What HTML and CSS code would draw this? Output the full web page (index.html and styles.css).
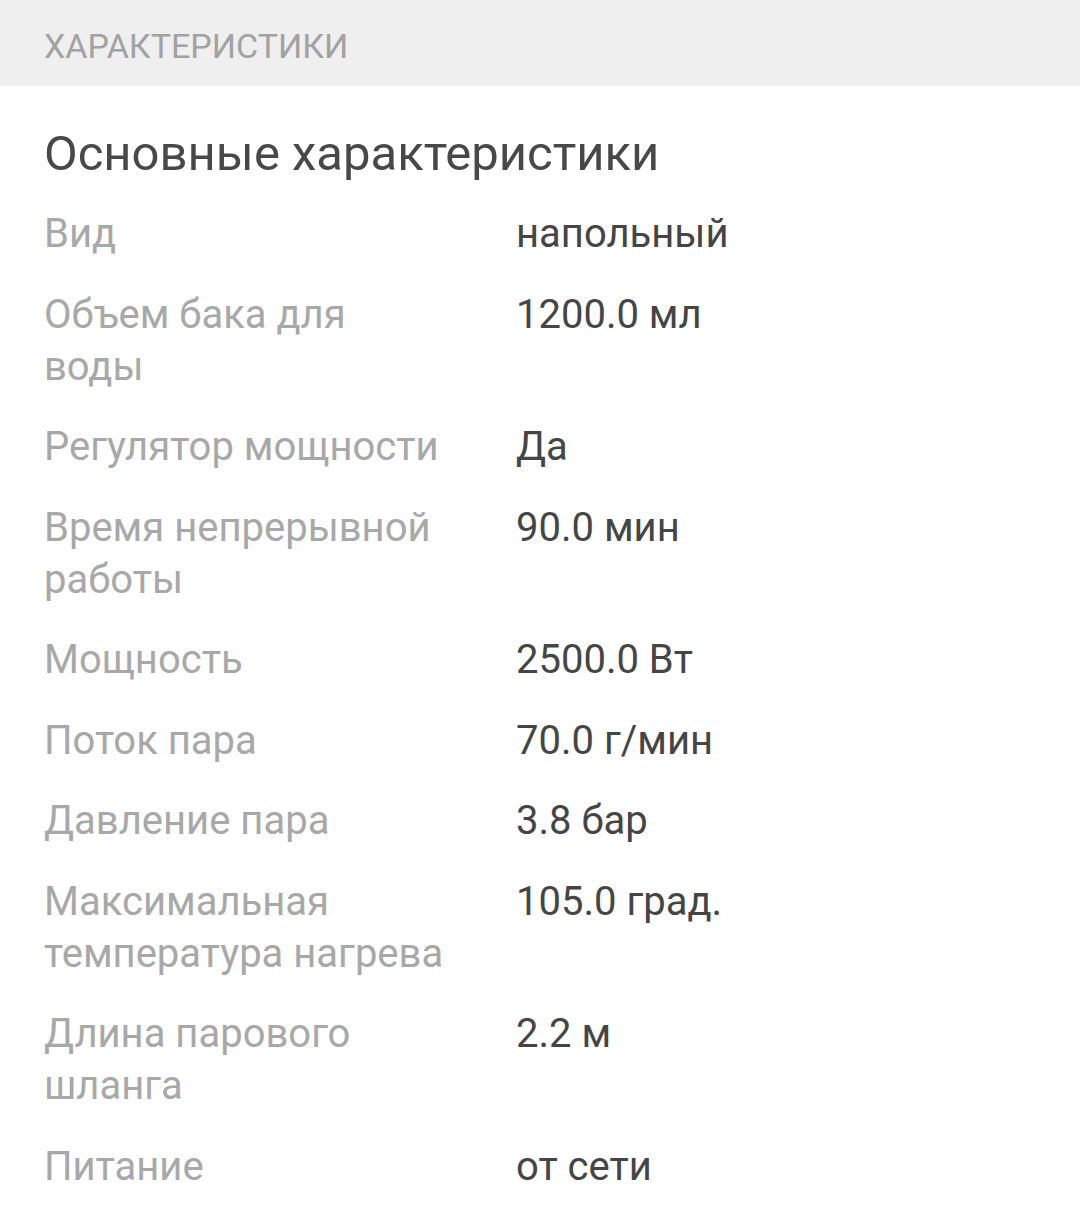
FILE: index.html
```html
<!DOCTYPE html>
<html lang="ru">
<head>
<meta charset="utf-8">
<link rel="stylesheet" href="styles.css">
</head>
<body>
<div class="section-bar">ХАРАКТЕРИСТИКИ</div>
<div class="specs">
  <h2 class="specs-title">Основные характеристики</h2>
  <div class="spec-list">
    <div class="spec-label">Вид</div><div class="spec-value">напольный</div>
    <div class="spec-label">Объем бака для воды</div><div class="spec-value">1200.0 мл</div>
    <div class="spec-label">Регулятор мощности</div><div class="spec-value">Да</div>
    <div class="spec-label">Время непрерывной работы</div><div class="spec-value">90.0 мин</div>
    <div class="spec-label">Мощность</div><div class="spec-value">2500.0 Вт</div>
    <div class="spec-label">Поток пара</div><div class="spec-value">70.0 г/мин</div>
    <div class="spec-label">Давление пара</div><div class="spec-value">3.8 бар</div>
    <div class="spec-label">Максимальная температура нагрева</div><div class="spec-value">105.0 град.</div>
    <div class="spec-label">Длина парового шланга</div><div class="spec-value">2.2 м</div>
    <div class="spec-label">Питание</div><div class="spec-value">от сети</div>
  </div>
</div>
</body>
</html>
```
FILE: styles.css
```css
html, body {
  margin: 0;
  padding: 0;
  background: #ffffff;
  font-family: Roboto, "Noto Sans", sans-serif;
}
.section-bar {
  height: 86px;
  box-sizing: border-box;
  background: #efefef;
  color: #a2a2a2;
  font-size: 34px;
  display: flex;
  align-items: center;
  padding-left: 44px;
  padding-top: 6px;
}
.specs {
  padding: 0 44px;
}
.specs-title {
  margin: 0;
  padding-top: 40px;
  font-size: 49px;
  font-weight: 400;
  color: #484848;
  line-height: 56px;
}
.spec-list {
  display: grid;
  grid-template-columns: 472px 1fr;
  row-gap: 28.5px;
  margin-top: 26px;
  font-size: 40px;
  line-height: 52px;
}
.spec-label {
  color: #a8a8a8;
  padding-right: 66px;
}
.spec-value {
  color: #454545;
}
```
